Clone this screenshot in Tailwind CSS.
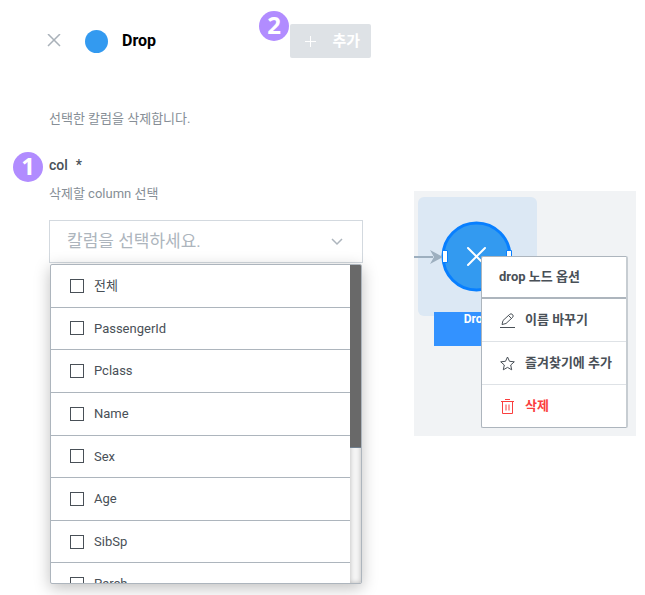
<!DOCTYPE html>
<html lang="ko">
<head>
<meta charset="utf-8">
<meta name="viewport" content="width=device-width, initial-scale=1">
<title>Drop</title>
<script src="https://cdn.jsdelivr.net/npm/@tailwindcss/browser@4"></script>
</head>
<body class="bg-white font-['Roboto','Noto_Sans_CJK_KR',sans-serif] text-[13px] text-[#495057]">
<div class="flex min-h-screen items-start overflow-hidden">
  <main class="min-w-0 flex-1">
    <header class="flex items-center pt-6 pr-[43px] pl-[47px]">
      <button type="button" aria-label="닫기" class="text-[#a9b1b9]">
        <svg class="size-[14px]" viewBox="0 0 14 14" fill="none" stroke="currentColor" stroke-width="1.5"><path d="M1 0 13 12M13 0 1 12"/></svg>
      </button>
      <span class="ml-6 size-[23px] rounded-full bg-[#339af0]"></span>
      <h1 class="ml-[14px] text-base leading-6 font-bold text-black">Drop</h1>
      <div class="relative ml-auto">
        <button type="button" disabled class="flex h-[34px] w-[81px] items-center justify-between rounded-xs bg-[#dee2e6] pr-[11px] pl-[15px] text-[15px] font-bold text-white">
          <svg class="size-[11px]" viewBox="0 0 11 11" fill="none" stroke="currentColor"><path d="M5.5 0V11M0 5.5H11"/></svg>
          추가
        </button>
        <span class="absolute -top-[13px] -left-[31px] flex size-[30px] items-center justify-center rounded-full bg-[#b18cff] pb-0.5 font-['Noto_Sans',sans-serif] text-2xl leading-none font-bold text-white">2</span>
      </div>
    </header>

    <section class="pt-[51px] pr-[51px] pl-[49px]">
      <p class="leading-5 text-[#868e96]">선택한 칼럼을 삭제합니다.</p>
      <div class="relative mt-[26px]">
        <span class="absolute -top-[3px] -left-9 flex size-[30px] items-center justify-center rounded-full bg-[#b18cff] pb-0.5 font-['Noto_Sans',sans-serif] text-2xl leading-none font-bold text-white">1</span>
        <label for="col" class="block text-sm leading-5 font-medium">col<span class="ml-2">*</span></label>
      </div>
      <p class="mt-[9px] leading-5 text-[#868e96]">삭제할 column 선택</p>
      <div class="relative mt-4">
        <select id="col" class="block h-[43px] w-full appearance-none border border-[#d3d9df] bg-white pr-10 pl-[17px] text-[17px] text-[#adb5bd]">
          <option>칼럼을 선택하세요.</option>
        </select>
        <svg class="pointer-events-none absolute top-[18px] right-5 h-2 w-3" viewBox="0 0 12 8" fill="none" stroke="#adb5bd" stroke-width="1.5"><path d="M1 1 6 6 11 1"/></svg>
      </div>
      <div class="relative mx-px mt-px flex h-80 overflow-hidden rounded-xs border border-[#adb5bd] bg-white shadow-[0_4px_16px_rgba(0,0,0,0.25)]">
        <div class="grid h-[341px] min-w-0 flex-1 auto-rows-fr">
          <label class="flex items-center gap-[10px] border-b border-[#adb5bd] pl-[19px]"><input type="checkbox" class="size-[14px] appearance-none border border-[#495057]">전체</label>
          <label class="flex items-center gap-[10px] border-b border-[#adb5bd] pl-[19px]"><input type="checkbox" class="size-[14px] appearance-none border border-[#495057]">PassengerId</label>
          <label class="flex items-center gap-[10px] border-b border-[#adb5bd] pl-[19px]"><input type="checkbox" class="size-[14px] appearance-none border border-[#495057]">Pclass</label>
          <label class="flex items-center gap-[10px] border-b border-[#adb5bd] pl-[19px]"><input type="checkbox" class="size-[14px] appearance-none border border-[#495057]">Name</label>
          <label class="flex items-center gap-[10px] border-b border-[#adb5bd] pl-[19px]"><input type="checkbox" class="size-[14px] appearance-none border border-[#495057]">Sex</label>
          <label class="flex items-center gap-[10px] border-b border-[#adb5bd] pl-[19px]"><input type="checkbox" class="size-[14px] appearance-none border border-[#495057]">Age</label>
          <label class="flex items-center gap-[10px] border-b border-[#adb5bd] pl-[19px]"><input type="checkbox" class="size-[14px] appearance-none border border-[#495057]">SibSp</label>
          <label class="flex items-center gap-[10px] border-b border-[#adb5bd] pl-[19px]"><input type="checkbox" class="size-[14px] appearance-none border border-[#495057]">Parch</label>
        </div>
        <div class="w-[11px] bg-[#f5f5f5] shadow-[inset_0_0_5px_rgba(0,0,0,0.25)]">
          <div class="h-[183px] border-b border-[#708090] bg-[#696969]"></div>
        </div>
      </div>
    </section>
  </main>

  <aside class="relative mt-[191px] mr-[9px] h-[245px] w-[222px] shrink-0 bg-[#f1f3f5]">
    <div class="absolute top-[6px] left-1 size-[119px] rounded-md bg-[#dce8f4]"></div>
    <div class="absolute top-[121px] left-5 h-[34px] w-[85px] bg-[#3392ff] text-center text-xs leading-[14px] font-bold text-white">Drop</div>
    <svg class="absolute top-0 left-0 h-[120px] w-[120px]" viewBox="0 0 120 120" fill="none">
      <circle cx="62.5" cy="65.5" r="33.5" fill="#339af0" stroke="#087fff" stroke-width="3"/>
      <path d="M0 66H19" stroke="#9dafbf" stroke-width="2"/>
      <path d="M16 59 29 66 16 73 20 66Z" fill="#9dafbf"/>
      <path d="M54 57 71 74M71 57 54 74" stroke="#fff" stroke-width="2" stroke-linecap="round"/>
      <path d="M28.5 59.500H33.500V71.500H28.500ZM92.500 59.500H97.500V71.500H92.500Z" fill="#fff" stroke="#087fff"/>
    </svg>
    <div role="menu" class="absolute top-[65px] left-[67px] w-[147px] rounded-xs border border-r-2 border-[#adb5bd] border-r-[#c7cdd2] bg-white font-bold">
      <div class="flex h-[42px] items-center border-b-2 border-[#adb5bd] pl-[17px]">drop 노드 옵션</div>
      <button type="button" role="menuitem" class="flex h-[43px] w-full items-center gap-[10px] border-b border-[#dee2e6] pl-[18px]">
        <svg class="size-[15px]" viewBox="0 0 15 15" fill="none" stroke="currentColor"><path d="M0 14.500H15M2 11.500 3 7.500 9.500 1.500Q11 0 12.500 1.500T12.500 4.500L6 10.500 2 11.500M8.500 2.500 11.500 5.500"/></svg>
        이름 바꾸기
      </button>
      <button type="button" role="menuitem" class="flex h-[43px] w-full items-center gap-[10px] border-b border-[#dee2e6] pl-[18px]">
        <svg class="size-[15px]" viewBox="0 0 15 15" fill="none" stroke="currentColor" stroke-linejoin="round"><path d="M7.500 1 9.500 5.300 14.300 5.800 10.700 9 11.700 13.800 7.500 11.400 3.300 13.800 4.300 9 .7 5.800 5.500 5.300Z"/></svg>
        즐겨찾기에 추가
      </button>
      <button type="button" role="menuitem" class="flex h-[42px] w-full items-center gap-[10px] pl-[18px] text-[#fa3e3e]">
        <svg class="size-[15px]" viewBox="0 0 15 15" fill="none" stroke="currentColor"><path d="M1 2.500H14M5 .5H10M2.500 2.500V14.500H12.500V2.500M6 5.500V11.500M9 5.500V11.500"/></svg>
        삭제
      </button>
    </div>
  </aside>
</div>
</body>
</html>
